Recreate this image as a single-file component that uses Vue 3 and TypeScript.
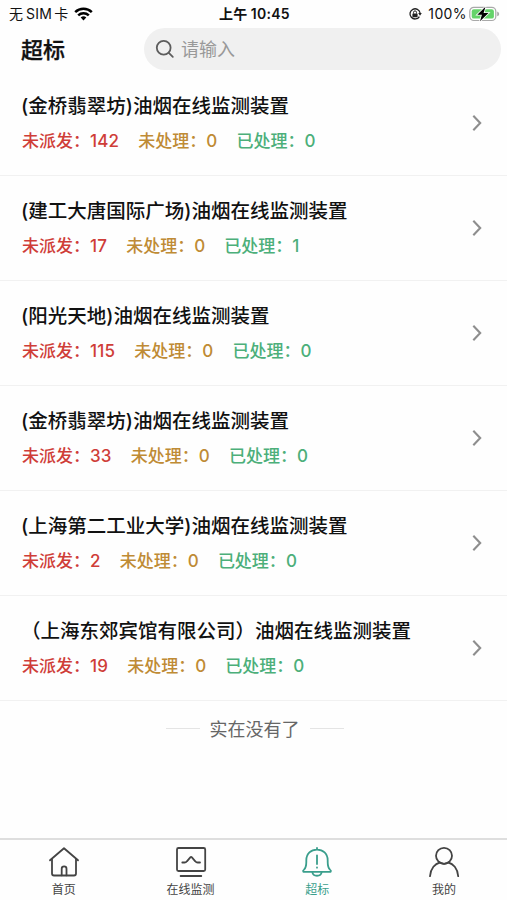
<script setup lang="ts">
import { ref } from 'vue'

interface Device {
  id: number
  name: string
  unassigned: number
  pending: number
  done: number
}

interface Tab {
  key: string
  label: string
}

const devices: Device[] = [
  { id: 1, name: '(金桥翡翠坊)油烟在线监测装置', unassigned: 142, pending: 0, done: 0 },
  { id: 2, name: '(建工大唐国际广场)油烟在线监测装置', unassigned: 17, pending: 0, done: 1 },
  { id: 3, name: '(阳光天地)油烟在线监测装置', unassigned: 115, pending: 0, done: 0 },
  { id: 4, name: '(金桥翡翠坊)油烟在线监测装置', unassigned: 33, pending: 0, done: 0 },
  { id: 5, name: '(上海第二工业大学)油烟在线监测装置', unassigned: 2, pending: 0, done: 0 },
  { id: 6, name: '（上海东郊宾馆有限公司）油烟在线监测装置', unassigned: 19, pending: 0, done: 0 },
]

const tabs: Tab[] = [
  { key: 'home', label: '首页' },
  { key: 'monitor', label: '在线监测' },
  { key: 'alarm', label: '超标' },
  { key: 'mine', label: '我的' },
]

const active = ref('alarm')
const keyword = ref('')
</script>

<template>
  <div class="screen">
    <div class="status">
      <div class="carrier">
        <span>无</span><span class="sim">SIM</span><span>卡</span>
        <svg class="wifi" width="19" height="14" viewBox="0 0 19 14" fill="none" stroke="#000" stroke-width="2.5">
          <path d="M1.2 5.1a12 12 0 0 1 16.6 0" />
          <path d="M4.2 8.3a7.7 7.7 0 0 1 10.6 0" />
          <path d="M6.7 10.6a4.1 4.1 0 0 1 5.6 0L9.5 13.5z" fill="#000" stroke="none" />
        </svg>
      </div>
      <div class="clock">上午<span class="time">10:45</span></div>
      <div class="power">
        <svg width="14" height="14" viewBox="0 0 14 14" fill="none" stroke="#222" stroke-width="1.3">
          <path d="M11.4 9.6A5.1 5.1 0 1 1 12.1 6" />
          <path d="M10.2 6h3.6L12 8.7z" fill="#222" stroke="none" />
          <rect x="4.4" y="6.4" width="5.2" height="3.8" rx=".6" fill="#222" stroke="none" />
          <path d="M5.5 6.6V5.4a1.5 1.5 0 0 1 3 0v1.2" stroke-width="1" />
        </svg>
        <span class="percent">100%</span>
        <svg class="battery" width="31" height="16" viewBox="0 0 31 16">
          <rect x=".8" y="1.3" width="26" height="13.2" rx="4" fill="#fff" stroke="#a9a9a9" stroke-width="1.2" />
          <rect x="2.7" y="3.2" width="22.2" height="9.4" rx="2.2" fill="#65d36a" />
          <path d="M28.2 5.6q2 .7 2 2.3t-2 2.3z" fill="#a9a9a9" />
          <path d="M16.5.8 8.3 8.7h4.6L11 15.2l8.5-8.1h-4.9z" fill="#000" stroke="#fff" stroke-width="1.6" paint-order="stroke" />
        </svg>
      </div>
    </div>

    <header class="header">
      <h1 class="heading">超标</h1>
      <label class="search">
        <svg width="20" height="20" viewBox="0 0 20 20" fill="none" stroke="#5d5d5d" stroke-width="1.8" stroke-linecap="round">
          <circle cx="8.7" cy="8.7" r="6.9" />
          <path d="m13.8 13.8 4 4" />
        </svg>
        <input v-model="keyword" class="input" type="text" placeholder="请输入" />
      </label>
    </header>

    <main class="list">
      <article v-for="d in devices" :key="d.id" class="row">
        <div class="info">
          <h2 class="name">{{ d.name }}</h2>
          <div class="stats">
            <span class="red">未派发：<b>{{ d.unassigned }}</b></span>
            <span class="amber">未处理：<b>{{ d.pending }}</b></span>
            <span class="green">已处理：<b>{{ d.done }}</b></span>
          </div>
        </div>
        <svg class="chevron" width="10" height="18" viewBox="0 0 10 18" fill="none" stroke="#8e8e8e" stroke-width="2.1">
          <path d="m1.3 1.7 6.9 7.3-6.9 7.3" />
        </svg>
      </article>
      <div class="end"><i class="dash" />实在没有了<i class="dash" /></div>
    </main>

    <nav class="tabs">
      <button v-for="t in tabs" :key="t.key" class="tab" :class="{ on: active === t.key }" @click="active = t.key">
        <svg class="icon" width="32" height="32" viewBox="0 0 32 32" fill="none" stroke="currentColor" stroke-width="1.8" stroke-linecap="round" stroke-linejoin="round">
          <template v-if="t.key === 'home'">
            <path d="M2 14.3 16 2.2l14 12.1" />
            <path d="M4 13v14.5q0 2 2 2h20q2 0 2-2V13" />
            <path d="M13.7 29.3v-6.6a2.4 2.4 0 0 1 4.8 0v6.6" />
          </template>
          <template v-else-if="t.key === 'monitor'">
            <rect x="2" y="2" width="28.2" height="23" rx="1.5" />
            <path d="M7.3 16.5h2.2q1.500 0 2.400-1.200l3.400-4q.8-.9 1.600 0l3.400 4q.9 1.200 2.400 1.200h2.300M5.600 30h20.700" />
          </template>
          <template v-else-if="t.key === 'alarm'">
            <path d="M16 2v1.700M2.300 25.800h27.400q.8-1-.7-2.200c-1.700-1.500-2.300-4.100-2.300-7.600v-1.600C26.700 7.500 22 3.700 16 3.700S5.300 7.500 5.300 14.400V16c0 3.500-.6 6.100-2.300 7.600q-1.500 1.200-.7 2.200z" />
            <path d="M11.300 26c.7 5 8.700 5 9.400 0" />
            <path d="M16 9.300v8.700M16 21.500v.2" />
          </template>
          <template v-else>
            <circle cx="16" cy="9.800" r="8" />
            <path d="M2 30.200c.6-8 5.200-12.600 9.800-13.700 2.800 1.700 5.800 1.700 8.600 0 4.600 1.100 9.200 5.700 9.800 13.700" />
          </template>
        </svg>
        <span class="label">{{ t.label }}</span>
      </button>
    </nav>
  </div>
</template>

<style>
body {
  margin: 0;
  background: #fff;
}
</style>

<style scoped>
.screen {
  display: flex;
  flex-direction: column;
  box-sizing: border-box;
  width: 100%;
  height: 100vh;
  overflow: hidden;
  background: #fefefe;
  color: #111;
  font-family: Inter, 'Noto Sans CJK SC', sans-serif;
}
.status {
  flex: none;
  display: grid;
  grid-template-columns: 1fr auto 1fr;
  align-items: center;
  height: 28px;
  padding: 0 7px 0 9px;
  font-size: 14px;
  line-height: 20px;
}
.carrier,
.power {
  display: flex;
  align-items: center;
}
.sim {
  margin: 0 2px 0 3px;
  letter-spacing: 0.3px;
}
.wifi {
  margin-left: 6px;
}
.clock {
  font-weight: 600;
  letter-spacing: 0.3px;
}
.time {
  margin-left: 3px;
}
.power {
  justify-content: flex-end;
}
.percent {
  margin: 0 2px 0 6px;
  letter-spacing: 0.4px;
}
.header {
  flex: none;
  display: flex;
  align-items: center;
  height: 43px;
  padding: 0 6px 0 21px;
}
.heading {
  width: 123px;
  margin: 0;
  font-size: 22px;
  line-height: 32px;
  font-weight: 500;
  -webkit-text-stroke: 0.3px;
}
.search {
  flex: 1;
  display: flex;
  align-items: center;
  gap: 6px;
  height: 42px;
  box-sizing: border-box;
  margin-bottom: 1px;
  padding: 0 11px;
  border-radius: 21px;
  background: #f0f0f0;
}
.input {
  flex: 1;
  min-width: 0;
  padding: 0;
  border: 0;
  outline: 0;
  background: none;
  font: inherit;
  font-size: 18px;
}
.input::placeholder {
  color: #999;
}
.list {
  flex: 1;
  min-height: 0;
}
.row {
  display: flex;
  align-items: center;
  justify-content: space-between;
  box-sizing: border-box;
  height: 105px;
  padding: 0 25px 0 21px;
  border-bottom: 1px solid #f1f1f1;
}
.name {
  margin: 0;
  font-size: 19.5px;
  line-height: 30px;
  font-weight: 500;
  white-space: nowrap;
}
.stats {
  display: flex;
  gap: 19px;
  margin: 6px 0 0 1px;
  font-size: 17px;
  line-height: 28px;
  font-weight: 500;
  white-space: nowrap;
}
.stats b {
  font-weight: 500;
  letter-spacing: 0.2px;
}
.red {
  color: #cf3d38;
}
.amber {
  color: #bf8b35;
}
.green {
  color: #4caf7a;
}
.end {
  display: flex;
  align-items: center;
  justify-content: center;
  gap: 10px;
  height: 54px;
  padding-left: 2px;
  font-size: 18px;
  color: #666;
}
.dash {
  width: 34px;
  height: 1px;
  background: #e4e4e4;
}
.tabs {
  flex: none;
  display: grid;
  grid-template-columns: repeat(4, 1fr);
  box-sizing: border-box;
  height: 62px;
  border-top: 2px solid #dedede;
}
.tab {
  display: flex;
  flex-direction: column;
  align-items: center;
  padding: 6px 0 0 1px;
  border: 0;
  background: none;
  color: #444;
  font: inherit;
}
.tab.on {
  color: #3a9e8c;
}
.label {
  margin-top: 3px;
  font-size: 12px;
  line-height: 18px;
}
</style>
